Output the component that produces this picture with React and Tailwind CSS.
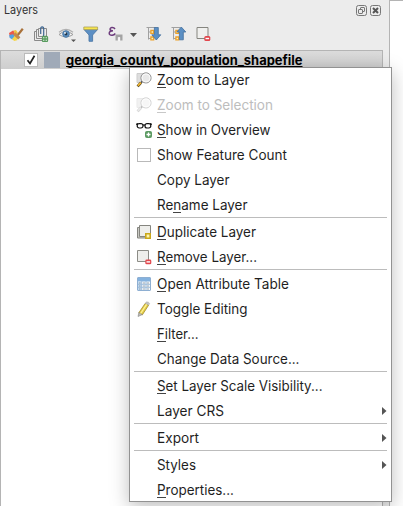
import React from "react";

const Svg = ({ w = 16, h = 16, children, className = "" }) => (
  <svg width={w} height={h} viewBox={`0 0 ${w} ${h}`} fill="none" className={`shrink-0 ${className}`}>
    {children}
  </svg>
);

const Magnifier = ({ faded }) => (
  <Svg className={faded ? "opacity-40" : ""}>
    <path d="M1 1.5h7v9H1z" fill="#dedede" stroke="#cdcdcd" />
    <path d="M6.2 9.4L4.6 11" stroke="#555" strokeWidth="1.6" />
    <path d="M5 10.6L1.6 14.4" stroke={faded ? "#999" : "#5a4a22"} strokeWidth="2.8" />
    <path d="M4.8 10.6L1.9 13.8" stroke={faded ? "#ccc" : "#f5b82e"} strokeWidth="1.7" />
    <circle cx="10" cy="5.9" r="5.1" fill="#e9e9e9" stroke="#8a8a8a" strokeWidth=".9" />
    <circle cx="10" cy="5.9" r="4" stroke="#fafafa" />
  </Svg>
);

const Glasses = () => (
  <Svg>
    <path d="M0 2.4L2 1.4M16 2.4L14 1.4M7 3.3q1-1 2 0" stroke="#111" strokeWidth="1.1" />
    <rect x="1.2" y="1.7" width="5.8" height="4.3" rx="2" stroke="#111" strokeWidth="1.2" />
    <rect x="9" y="1.7" width="5.8" height="4.3" rx="2" stroke="#111" strokeWidth="1.2" />
    <rect x="9.5" y="9.5" width="6" height="6" rx="1" fill="#5b9a62" stroke="#5b9a62" />
    <path d="M12.5 10.5v4M10.5 12.5h4" stroke="#fff" strokeWidth="1.3" />
  </Svg>
);

const Box = () => (
  <Svg><rect x="1.5" y="1.5" width="13" height="13" fill="#fff" stroke="#b9b9b9" /></Svg>
);

const Duplicate = () => (
  <Svg>
    <path d="M1.5 3.5h9v10.5h-9z" fill="#c9c9c4" stroke="#85857f" />
    <path d="M3.5 1.5h11v11h-11z" fill="#eeeeeb" stroke="#85857f" />
    <path d="M9.8 9.8h4.4v4.4H9.8z" fill="#fff4ad" stroke="#c9a71b" strokeWidth="1.6" />
  </Svg>
);

const Remove = () => (
  <Svg>
    <path d="M1.5 1.5h11v11h-11z" fill="#eeeeeb" stroke="#8c8c86" />
    <rect x="9.3" y="10.5" width="6" height="4.8" rx="1.4" fill="#e2474d" />
    <path d="M10.5 12.9h3.6" stroke="#fff" strokeWidth="1.4" />
  </Svg>
);

const Table = () => (
  <Svg>
    <rect x="1.5" y="1.5" width="13" height="13" rx=".5" fill="#f5f8fb" stroke="#8eafd2" />
    <path d="M2 2h12v3.5H2z" fill="#84b2df" />
    <path d="M2 6h3.5v8H2z" fill="#c4daef" />
    <path d="M5.7 5v9M10 5v9M2 8.3h12M2 11.3h12" stroke="#9ebcda" />
    <path d="M7 7h2M11 7h2M7 10h2M11 10h2M7 13h2M11 13h2M3 7h1.5M3 10h1.5M3 13h1.5" stroke="#778797" strokeWidth=".7" />
  </Svg>
);

const Pencil = () => (
  <Svg>
    <path d="M9.2 2.4l3.4 1.8-6.2 9.6-3.6-2z" fill="#e3cd45" stroke="#a48b2f" strokeWidth=".8" />
    <path d="M9.3 2.2l1-1.3q2.3-.3 3.4 1.6l-1 1.6z" fill="#c4c4c4" stroke="#aaa" strokeWidth=".5" />
    <path d="M2.8 11.6l3.6 2L2 15.5z" fill="#bdbab3" stroke="#777" strokeWidth=".5" />
    <path d="M10.6 3.4L4.6 12.5" stroke="#fff29a" strokeWidth="1.2" />
  </Svg>
);

const Item = ({ icon, k = -1, text, width, disabled, sub }) => (
  <div className="flex h-[25px] shrink-0 items-start pl-[7px]">
    <div className="flex h-[25px] w-4 items-center justify-center">{icon}</div>
    <svg width="225" height="25" className="ml-[5px] shrink-0 overflow-visible">
      <text x="0" y="18.2" fontSize="14" textLength={width} lengthAdjust="spacingAndGlyphs" fill={disabled ? "#bdbdbd" : "#1f1f1f"}>{text}</text>
      {k >= 0 && <path d={`M${k} 20.5h${k ? 8 : 9}`} stroke={disabled ? "#c8c8c8" : "#444"} />}
    </svg>
    {sub && <svg width="5" height="25" className="shrink-0"><path d="M0 9v8L4.5 13z" fill="#555" /></svg>}
  </div>
);

const Sep = () => <div className="mx-[5px] h-[2px] shrink-0 border-t border-[#bcbcbc]" />;

const Brush = () => (
  <Svg>
    <path d="M1 7l4-2.5 3 2-2 4-4 1z" fill="#ea5a4c" />
    <path d="M1.2 9l4-.8 2 3-3 2.2-2.6-1.6z" fill="#54a4e2" />
    <path d="M4 13l3-3.2 3 1.5-.8 3-3 .6z" fill="#f5d64a" />
    <path d="M5.5 4.5L8 4l2 3-3 3z" fill="#f3c545" />
    <path d="M7.2 6.2l5.2 5-2.2 2.4-5-4.8z" fill="#c58b4a" />
    <path d="M9.8 9l5-6.2" stroke="#a9713a" strokeWidth="2.2" />
  </Svg>
);

const AddGroup = () => (
  <Svg>
    <path d="M3.5 5.5h-2v9H9M6 3.5H3.5v9H9" stroke="#8a8a8a" />
    <path d="M5.5 2.5h8v8h-8z" fill="#ececec" stroke="#8a8a8a" />
    <path d="M7.7 8V3Q7.7 .8 9.2 .8T10.7 3v6q0 1.2-1 1.2" stroke="#3f6690" strokeWidth="1.2" />
    <rect x="9.5" y="10.5" width="5" height="5" rx="1" fill="#fff" stroke="#569b5d" strokeWidth="1.3" />
    <path d="M12 11v4M10 13h4" stroke="#569b5d" strokeWidth="1.3" />
  </Svg>
);

const Eye = () => (
  <Svg w={18}>
    <path d="M1 8.5Q7.5 2.5 15 8.5 8 13.5 1 8.5z" fill="#f7f7f7" stroke="#9a9a9a" />
    <path d="M1 6.2Q8 .6 15 6.2" stroke="#b0b0b0" strokeWidth="1.2" />
    <circle cx="8" cy="8" r="3.3" fill="#5b8fc0" stroke="#4d7ba8" />
    <circle cx="8" cy="8" r="1.4" fill="#263849" />
    <circle cx="7" cy="6.9" r=".9" fill="#fff" />
    <path d="M13 13.5h5L15.5 16z" fill="#555" />
  </Svg>
);

const Funnel = () => (
  <Svg>
    <path d="M1 3.5L6 9v6.3h3.6V9l5-5.5z" fill="#5c8fc4" stroke="#4d79a8" strokeWidth=".9" />
    <path d="M.8 1h13.8v2.6H.8z" fill="#f8e64b" stroke="#a9a05a" strokeWidth=".8" />
  </Svg>
);

const Expression = () => (
  <Svg>
    <path d="M7 3Q6 1.4 3.8 1.6 1.6 2 2.2 3.9q.4 1 2.8.9Q1.5 5 1.2 7q0 2.4 3 2.2Q6.3 9 7.3 7.5" stroke="#6c3b7c" strokeWidth="1.5" />
    <path d="M7.5 8.5h7v6h-2.3v-3.3H9.8v3.3H7.5z" fill="#a3a3a3" />
    <path d="M10.2 11.2h1.8v4h-1.8z" fill="#f8f8f8" />
  </Svg>
);

const TreeArrow = ({ up }) => (
  <Svg>
    <path d="M.5 1.5h9M2.5 2v11.5M3 6h2M3 12.5h2" stroke="#a0a0a0" />
    <path d="M4.9 4.5h2.8v2.8H4.9zM4.9 11h2.8v2.8H4.9z" fill="#fff0bb" stroke="#eda12a" strokeWidth="1.3" />
    <path d={up ? "M10.3 1l4.5 5h-2.5v7.8H8.4V6H5.9z" : "M8.4 1.5h3.9v7.3h2.5l-4.5 5.2-4.5-5.2h2.6z"} fill="#5b8fc4" stroke="#426e9d" strokeWidth=".8" />
  </Svg>
);

const RemoveOutline = () => (
  <Svg>
    <path d="M1 1.5h11v11H1z" fill="#f0f0ee" stroke="#85857f" />
    <rect x="8.3" y="10" width="6" height="5" rx="1.5" fill="#e2474d" />
    <path d="M9.5 12.5h3.6" stroke="#fff" strokeWidth="1.4" />
  </Svg>
);

export default function App() {
  return (
    <div className="relative flex h-[506px] w-[403px] overflow-hidden bg-white font-['Inter',sans-serif]">
      <div className="flex w-[390px] flex-col border-r border-[#b4b4b4] bg-[#ececec]">
        <div className="flex h-5 items-center justify-between pl-1 pr-2">
          <svg width="60" height="20"><text x="0" y="14.2" fontSize="11.5" textLength="34" lengthAdjust="spacingAndGlyphs" fill="#333">Layers</text></svg>
          <div className="flex gap-[3px]">
            <Svg w={11} h={11}>
              <rect x=".5" y=".5" width="10" height="10" rx="2" stroke="#777" />
              <rect x="4.5" y="2.5" width="4" height="4" rx=".5" stroke="#777" />
              <rect x="2.5" y="4.5" width="4" height="4" rx=".5" fill="#ececec" stroke="#777" />
            </Svg>
            <Svg w={11} h={11}>
              <rect x=".5" y=".5" width="10" height="10" rx="2" stroke="#777" />
              <path d="M3 3l5 5M8 3L3 8" stroke="#555" strokeWidth="2" />
            </Svg>
          </div>
        </div>
        <div className="flex h-[30px] shrink-0 items-start gap-[9px] pl-2 pt-[6px]">
          <Brush />
          <AddGroup />
          <Eye />
          <div className="-ml-[2px] flex gap-[9px]">
            <Funnel />
            <Expression />
          </div>
          <svg width="7" height="16" className="-ml-[3px]"><path d="M0 7h7L3.5 11z" fill="#555" /></svg>
          <TreeArrow />
          <TreeArrow up />
          <RemoveOutline />
        </div>
        <div className="mr-[6px] flex-1 border border-b-0 border-[#b4b4b4] bg-white">
          <div className="flex h-[18px] items-center bg-linear-to-b from-[#dcdcdc] to-[#cecece] pl-[23px]">
            <svg width="14" height="14" className="shrink-0">
              <rect x=".5" y=".5" width="13" height="13" fill="#fff" stroke="#bbb" />
              <path d="M3.5 7.2l2.5 3.3 4.5-7.7" stroke="#222" strokeWidth="1.7" fill="none" />
            </svg>
            <div className="ml-[6px] h-4 w-4 shrink-0 bg-[#a0aab8]" />
            <svg width="238" height="18" className="ml-[6px] shrink-0">
              <text x="0" y="14" fontSize="13" fontWeight="700" textLength="236.5" lengthAdjust="spacingAndGlyphs" fill="#000">georgia_county_population_shapefile</text>
              <path d="M0 15.5h236.5" stroke="#000" />
            </svg>
          </div>
        </div>
      </div>
      <div className="flex-1 border-t border-[#b4b4b4]" />

      <div className="absolute left-[129px] top-[67px] flex h-[435px] w-[263px] flex-col bg-white shadow-[inset_0_0_0_1px_#929292,0_5px_18px_rgba(0,0,0,0.26)]">
        <Item icon={<Magnifier />} k={0} text="Zoom to Layer" width={92.5} />
        <Item icon={<Magnifier faded />} k={0} text="Zoom to Selection" width={116} disabled />
        <Item icon={<Glasses />} k={0} text="Show in Overview" width={113.5} />
        <Item icon={<Box />} text="Show Feature Count" width={130} />
        <Item text="Copy Layer" width={72.5} />
        <Item k={16} text="Rename Layer" width={90.5} />
        <Sep />
        <Item icon={<Duplicate />} k={0} text="Duplicate Layer" width={99} />
        <Item icon={<Remove />} k={0} text="Remove Layer..." width={100} />
        <Sep />
        <Item icon={<Table />} k={0} text="Open Attribute Table" width={132} />
        <Item icon={<Pencil />} text="Toggle Editing" width={90.5} />
        <Item k={0} text="Filter..." width={41.5} />
        <Item text="Change Data Source..." width={142.5} />
        <Sep />
        <Item k={0} text="Set Layer Scale Visibility..." width={165.5} />
        <Item text="Layer CRS" width={67} sub />
        <Sep />
        <Item text="Export" width={42} sub />
        <Sep />
        <Item text="Styles" width={39} sub />
        <Item k={0} text="Properties..." width={77} />
      </div>
    </div>
  );
}
